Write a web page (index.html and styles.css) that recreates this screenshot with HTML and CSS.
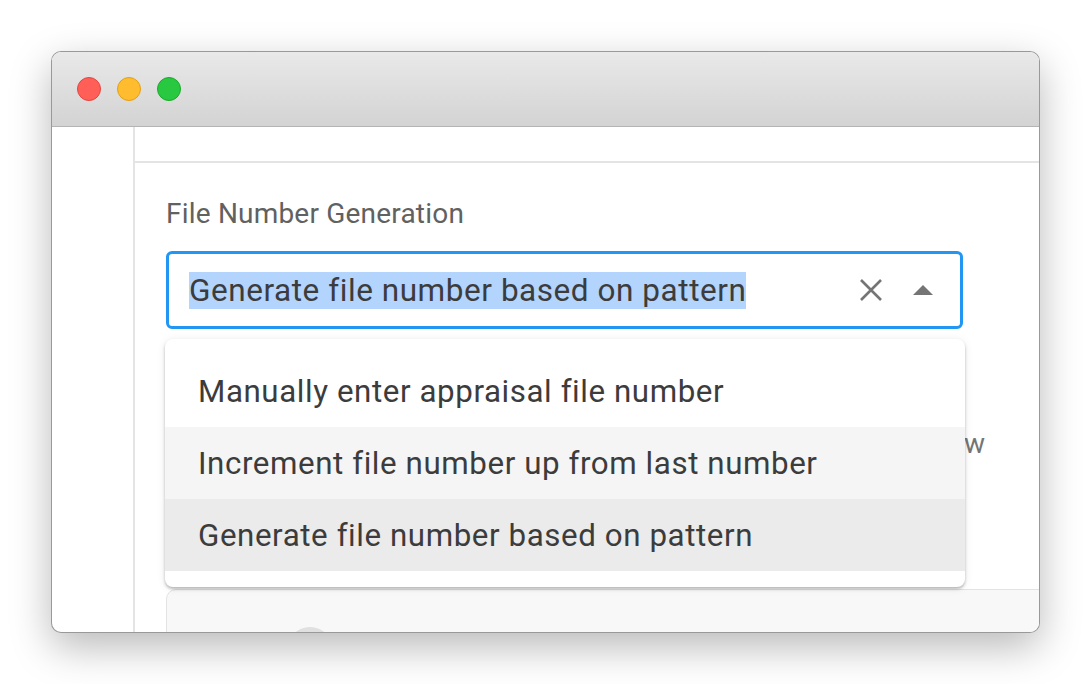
FILE: index.html
```html
<!DOCTYPE html>
<html lang="en">
<head>
  <meta charset="UTF-8">
  <meta name="viewport" content="width=device-width, initial-scale=1.0">
  <title>File Number Generation</title>
  <link rel="stylesheet" href="styles.css">
</head>
<body>
  <div class="window">
    <div class="titlebar">
      <span class="light red"></span>
      <span class="light yellow"></span>
      <span class="light green"></span>
    </div>

    <div class="window-body">
      <aside class="sidebar"></aside>

      <main class="main">
        <div class="topbar"></div>

        <section class="form">
          <label class="field-label">File Number Generation</label>

          <div class="select-wrap">
            <div class="select">
              <span class="select-value"><span class="selected-text">Generate file number based on pattern</span></span>
              <svg class="clear-icon" width="24" height="24" viewBox="0 0 24 24">
                <path d="M2 2 L22 22 M22 2 L2 22" stroke="#757575" stroke-width="2.6" fill="none"/>
              </svg>
              <svg class="arrow-icon" width="20" height="10" viewBox="0 0 20 10">
                <polygon points="0,10 10,0 20,10" fill="#757575"/>
              </svg>
            </div>

            <ul class="menu">
              <li class="option">Manually enter appraisal file number</li>
              <li class="option hovered">Increment file number up from last number</li>
              <li class="option selected">Generate file number based on pattern</li>
            </ul>
          </div>

          <p class="hint">The next file number will be shown in the preview</p>

          <div class="card">
            <span class="toggle"></span>
          </div>
        </section>
      </main>
    </div>
  </div>
</body>
</html>
```

FILE: styles.css
```css
:root {
  --blue: #2196f3;
  --line: #e4e4e4;
  --text: #3c3c3c;
  --muted: #757575;
}
* { box-sizing: border-box; margin: 0; padding: 0; }
body {
  font-family: Roboto, "Liberation Sans", sans-serif;
  background: #fff;
  padding: 51px 0 0 51px;
  height: 684px;
  overflow: hidden;
}
.window {
  width: 989px;
  height: 582px;
  border: 1px solid rgba(0,0,0,0.4);
  border-radius: 10px;
  background: #fff;
  overflow: hidden;
  display: flex;
  flex-direction: column;
  box-shadow: 0 14px 40px rgba(0,0,0,0.28);
}
.titlebar {
  height: 75px;
  flex-shrink: 0;
  display: flex;
  align-items: center;
  gap: 16px;
  padding-left: 25px;
  background: linear-gradient(#e9e9e9, #d3d3d3);
  border-bottom: 1px solid #b4b4b4;
}
.light {
  width: 24px;
  height: 24px;
  border-radius: 50%;
}
.red { background: #ff5f57; border: 1px solid #e2463f; }
.yellow { background: #febc2e; border: 1px solid #e1a116; }
.green { background: #28c840; border: 1px solid #1aab29; }

.window-body {
  flex: 1;
  display: flex;
  min-height: 0;
}
.sidebar {
  width: 83px;
  flex-shrink: 0;
  border-right: 2px solid var(--line);
}
.main {
  flex: 1;
  min-width: 0;
}
.topbar {
  height: 36px;
  border-bottom: 2px solid var(--line);
}
.form {
  position: relative;
  padding: 34px 0 0 31px;
}
.field-label {
  display: block;
  font-size: 28px;
  letter-spacing: 0.2px;
  color: #616161;
  margin-bottom: 21px;
}
.select-wrap {
  position: relative;
  width: 797px;
}
.select {
  height: 78px;
  border: 3px solid var(--blue);
  border-radius: 6px;
  display: flex;
  align-items: center;
  padding: 0 27px 0 20px;
}
.select-value {
  flex: 1;
  font-size: 31.5px;
  letter-spacing: 0.55px;
  color: var(--text);
}
.selected-text {
  background: #b3d4fc;
}
.clear-icon {
  margin-right: 30px;
}
.menu {
  position: absolute;
  top: 88px;
  left: -1px;
  width: 800px;
  list-style: none;
  background: #fff;
  border-radius: 8px;
  padding: 16px 0;
  box-shadow: 0 2px 3px rgba(0,0,0,0.25), 0 1px 10px rgba(0,0,0,0.08);
  z-index: 2;
}
.option {
  height: 72px;
  display: flex;
  align-items: center;
  padding-left: 33px;
  font-size: 31.3px;
  letter-spacing: 0.58px;
  color: var(--text);
}
.option.hovered { background: #f5f5f5; }
.option.selected { background: #ebebeb; }

.hint {
  width: 819px;
  text-align: right;
  font-size: 28px;
  color: var(--muted);
  margin-top: 98px;
}
.card {
  margin-top: 129px;
  height: 120px;
  width: calc(100% + 20px);
  background: #f8f8f8;
  border: 1px solid #e3e3e3;
  border-radius: 10px;
  padding: 37px 0 0 120px;
}
.toggle {
  display: block;
  width: 46px;
  height: 46px;
  border-radius: 50%;
  background: #e0e0e0;
}
```
